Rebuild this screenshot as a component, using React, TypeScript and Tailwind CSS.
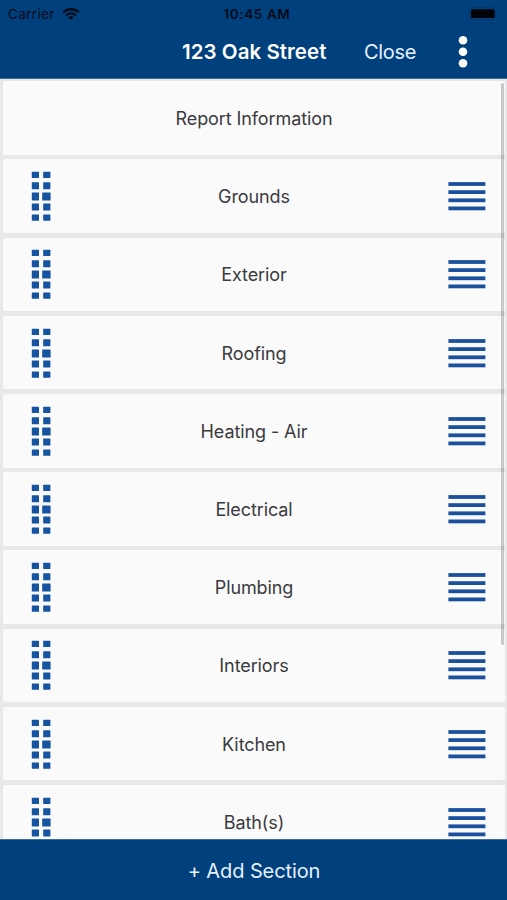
interface SectionRowProps {
  name: string;
  draggable?: boolean;
}

const sections = [
  "Grounds",
  "Exterior",
  "Roofing",
  "Heating - Air",
  "Electrical",
  "Plumbing",
  "Interiors",
  "Kitchen",
  "Bath(s)",
];

const WifiIcon = () => (
  <svg width="18" height="13" viewBox="0 0 18 13" fill="none" stroke="#020b18">
    <path d="M1.2 4.4C5.6 0.2 12.4 0.2 16.8 4.4" strokeWidth="2.3" />
    <path d="M4 7.3C6.8 4.7 11.2 4.7 14 7.3" strokeWidth="2.2" />
    <path d="M9 12L6.2 9.2C7.8 7.8 10.2 7.8 11.8 9.2Z" fill="#020b18" stroke="none" />
  </svg>
);

const BatteryIcon = () => (
  <svg width="29" height="14" viewBox="0 0 29 14">
    <rect x="0.7" y="0.7" width="25.6" height="12.2" rx="3" fill="none" stroke="#00356a" />
    <rect x="2" y="2.2" width="23.5" height="8.9" rx="1.5" fill="#000308" />
    <path d="M27.3 5V9.5C28.8 8.8 28.8 5.7 27.3 5Z" fill="#00356a" />
  </svg>
);

const MoreIcon = () => (
  <svg width="10" height="34" viewBox="0 0 10 34" fill="#fff">
    <circle cx="5" cy="5.3" r="4.3" />
    <circle cx="5" cy="16.8" r="4.3" />
    <circle cx="5" cy="28.2" r="4.3" />
  </svg>
);

const GripIcon = () => (
  <svg width="20" height="50" viewBox="0 0 20 50" fill="#1653a0">
    <rect x="0.8" y="0.7" width="7.2" height="6.2" rx="0.5" />
    <rect x="12.2" y="0.7" width="7.2" height="6.2" rx="0.5" />
    <rect x="0.8" y="11.2" width="7.2" height="7" rx="0.5" />
    <rect x="12.2" y="11.2" width="7.2" height="7" rx="0.5" />
    <rect x="0.8" y="21.4" width="7.2" height="8" rx="0.5" />
    <rect x="11.2" y="21.4" width="8.4" height="8" rx="0.5" />
    <rect x="0.8" y="32.5" width="7.2" height="7" rx="0.5" />
    <rect x="12.2" y="32.5" width="7.2" height="7" rx="0.5" />
    <rect x="0.8" y="43.6" width="7.2" height="6.2" rx="0.5" />
    <rect x="12.2" y="43.6" width="7.2" height="6.2" rx="0.5" />
  </svg>
);

const LinesIcon = () => (
  <svg width="38" height="30" viewBox="0 0 38 30" fill="#1b509c">
    <rect x="0.4" y="1.1" width="37" height="3.8" />
    <rect x="0.4" y="9.2" width="37" height="3.8" />
    <rect x="0.4" y="17.4" width="37" height="3.8" />
    <rect x="0.4" y="25.5" width="37" height="3.8" />
  </svg>
);

const StatusBar = () => (
  <div className="grid h-7 grid-cols-3 items-center pr-[9px] pl-2 text-[13.5px] text-[#020b18]">
    <div className="flex items-center gap-[7px]">
      <span className="tracking-[0.35px]">Carrier</span>
      <WifiIcon />
    </div>
    <div className="pl-2 text-center font-semibold tracking-[0.6px] whitespace-nowrap">10:45 AM</div>
    <div className="flex justify-end">
      <BatteryIcon />
    </div>
  </div>
);

const SectionRow = ({ name, draggable = true }: SectionRowProps) => (
  <div className="grid h-[73.6px] shrink-0 grid-cols-[1fr_auto_1fr] items-center rounded-[2px] bg-[#fafafb] pr-[19px] pl-7">
    <div>{draggable && <GripIcon />}</div>
    <div className="pt-px pr-[9px] text-[18px] tracking-[-0.1px] text-[#3b3b3d]">{name}</div>
    <div className="flex justify-end">{draggable && <LinesIcon />}</div>
  </div>
);

export default function App() {
  return (
    <div className="flex h-[900px] w-[507px] flex-col overflow-hidden bg-[#e8e8eb] font-['Inter','Liberation_Sans',sans-serif]">
      <header className="h-[79px] shrink-0 border-b border-[#3d6c9f] bg-[#00407d] text-white">
        <StatusBar />
        <div className="flex h-12 items-center pl-[182px]">
          <h1 className="w-[182px] text-[20.5px] font-semibold tracking-[0.05px]">123 Oak Street</h1>
          <button className="w-[94px] text-left text-[20px] tracking-[-0.3px] text-[#e5f1ff]">Close</button>
          <MoreIcon />
        </div>
      </header>
      <main className="relative flex min-h-0 flex-1 flex-col gap-[4.6px] overflow-hidden pt-[2.3px] pr-[2px] pl-[3px]">
        <SectionRow name="Report Information" draggable={false} />
        {sections.map((name) => (
          <SectionRow key={name} name={name} />
        ))}
        <div className="absolute top-1 right-[3px] h-[562px] w-[3px] rounded-full bg-black/20" />
      </main>
      <footer className="flex h-[61px] shrink-0 items-center justify-center border-t border-[#3d6c9f] bg-[#00407d] pt-px pl-px text-[20px] tracking-[-0.1px] text-[#e5f1ff]">
        + Add Section
      </footer>
    </div>
  );
}
